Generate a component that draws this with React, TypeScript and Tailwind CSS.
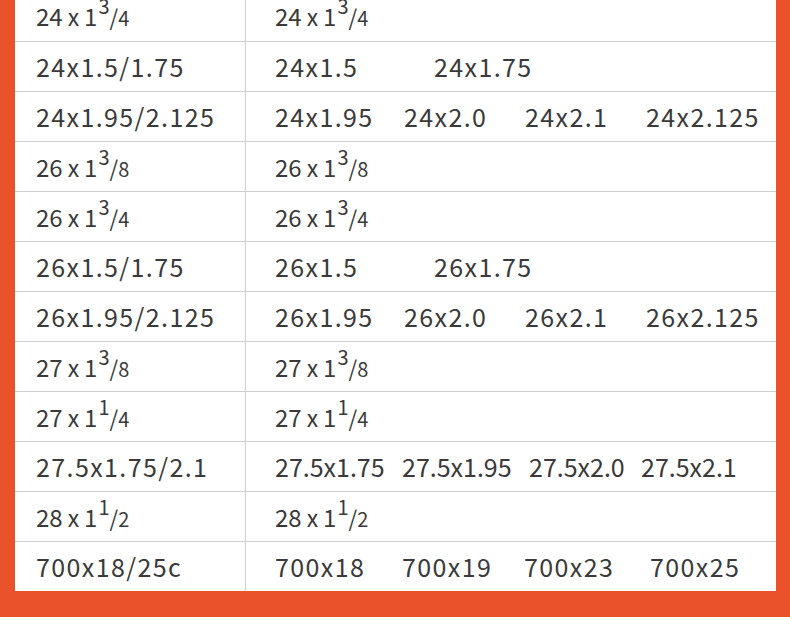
import React from "react";

type Frac = { whole: string; num: string; den: string };
type Cell = { text?: string; frac?: Frac; w?: string };
type Row = { size: Cell; items: Cell[]; tight?: boolean };

const rows: Row[] = [
  {
    size: { frac: { whole: "24", num: "3", den: "4" } },
    items: [{ frac: { whole: "24", num: "3", den: "4" } }],
  },
  {
    size: { text: "24x1.5/1.75" },
    items: [{ text: "24x1.5", w: "w-[159px]" }, { text: "24x1.75" }],
  },
  {
    size: { text: "24x1.95/2.125" },
    items: [
      { text: "24x1.95", w: "w-[129px]" },
      { text: "24x2.0", w: "w-[121px]" },
      { text: "24x2.1", w: "w-[121px]" },
      { text: "24x2.125" },
    ],
  },
  {
    size: { frac: { whole: "26", num: "3", den: "8" } },
    items: [{ frac: { whole: "26", num: "3", den: "8" } }],
  },
  {
    size: { frac: { whole: "26", num: "3", den: "4" } },
    items: [{ frac: { whole: "26", num: "3", den: "4" } }],
  },
  {
    size: { text: "26x1.5/1.75" },
    items: [{ text: "26x1.5", w: "w-[159px]" }, { text: "26x1.75" }],
  },
  {
    size: { text: "26x1.95/2.125" },
    items: [
      { text: "26x1.95", w: "w-[129px]" },
      { text: "26x2.0", w: "w-[121px]" },
      { text: "26x2.1", w: "w-[121px]" },
      { text: "26x2.125" },
    ],
  },
  {
    size: { frac: { whole: "27", num: "3", den: "8" } },
    items: [{ frac: { whole: "27", num: "3", den: "8" } }],
  },
  {
    size: { frac: { whole: "27", num: "1", den: "4" } },
    items: [{ frac: { whole: "27", num: "1", den: "4" } }],
  },
  {
    size: { text: "27.5x1.75/2.1" },
    tight: true,
    items: [
      { text: "27.5x1.75", w: "w-[127px]" },
      { text: "27.5x1.95", w: "w-[127px]" },
      { text: "27.5x2.0", w: "w-[112px]" },
      { text: "27.5x2.1" },
    ],
  },
  {
    size: { frac: { whole: "28", num: "1", den: "2" } },
    items: [{ frac: { whole: "28", num: "1", den: "2" } }],
  },
  {
    size: { text: "700x18/25c" },
    items: [
      { text: "700x18", w: "w-[127px]" },
      { text: "700x19", w: "w-[122px]" },
      { text: "700x23", w: "w-[126px]" },
      { text: "700x25" },
    ],
  },
];

function CellText({ cell }: { cell: Cell }) {
  if (cell.frac) {
    // "27 x 1¹/4" — tight spacing, small numerator raised, small denominator
    return (
      <span className="whitespace-nowrap tracking-normal text-[24px]">
        {cell.frac.whole}
        <span className="ml-[5px] mr-[5px] text-[23px]">x</span>1
        <span className="relative -top-[12px] ml-[1px] text-[20px]">{cell.frac.num}</span>
        <span className="text-[22px]">/</span>
        <span className="text-[20px]">{cell.frac.den}</span>
      </span>
    );
  }
  return <span className="whitespace-nowrap">{cell.text}</span>;
}

export default function App() {
  return (
    <div className="w-[790px] h-[625px] overflow-hidden bg-white">
      <div className="bg-[#e9522a] pl-[15px] pr-[14px] pb-[26px]">
        <div
          className="-mt-[9px] bg-white text-[#3a3a3a] text-[25px] tracking-[1.4px]"
          style={{ fontFamily: '"Noto Sans CJK SC", "Noto Sans", sans-serif' }}
        >
          {rows.map((row, i) => (
            <div
              key={i}
              className={`flex h-[50px] ${i > 0 ? "border-t border-[#cfcfcf]" : ""}`}
            >
              <div className="w-[231px] shrink-0 border-r border-[#cfcfcf] pl-[21px] flex items-center">
                <CellText cell={row.size} />
              </div>
              <div className={`flex items-center pl-[29px] ${row.tight ? "tracking-normal" : ""}`}>
                {row.items.map((it, j) => (
                  <span key={j} className={`inline-block shrink-0 ${it.w ?? ""}`}>
                    <CellText cell={it} />
                  </span>
                ))}
              </div>
            </div>
          ))}
        </div>
      </div>
    </div>
  );
}
